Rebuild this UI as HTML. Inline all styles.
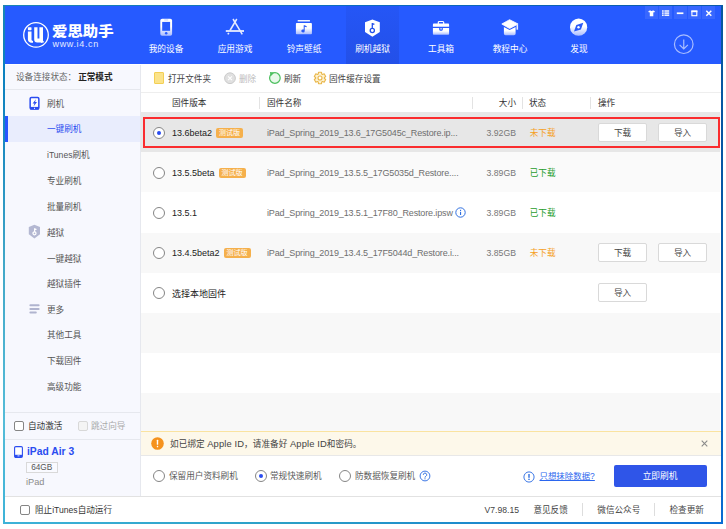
<!DOCTYPE html>
<html lang="zh-CN">
<head>
<meta charset="utf-8">
<title>爱思助手</title>
<style>
*{box-sizing:border-box;margin:0;padding:0}
html,body{width:726px;height:529px;overflow:hidden;background:#fff}
body{position:relative;font-family:"Liberation Sans","Noto Sans CJK SC",sans-serif;font-size:8.600px;color:#333;-webkit-font-smoothing:antialiased}
.abs,.t{position:absolute}
.t{white-space:nowrap;line-height:12px;height:12px}
#frame{position:absolute;left:3px;top:5px;width:720px;height:519px;
 background:linear-gradient(180deg,#1a88b4 0%,#0a80c0 12%,#1888c0 25%,#42a8c8 50%,#55bcd8 80%,#3db3d8 100%)}
#frameR{position:absolute;left:721px;top:5px;width:2px;height:519px;background:linear-gradient(180deg,#06589f 0%,#0557a8 50%,#0a6cd2 100%)}
#frameB{position:absolute;left:3px;top:522px;width:720px;height:2px;background:linear-gradient(90deg,#3db3d8 0%,#2a9fc6 40%,#0a6ed6 100%)}
#frameT{position:absolute;left:3px;top:5px;width:720px;height:1px;background:linear-gradient(90deg,#1a86b4 0%,#0a6cc0 50%,#0a5aa8 100%)}
#win{position:absolute;left:5px;top:6px;width:716px;height:516px;background:#fff;overflow:hidden}
/* everything inside #win uses page coords via offset wrapper */
#pg{position:absolute;left:-5px;top:-6px;width:726px;height:529px}
#hdr{position:absolute;left:5px;top:6px;width:716px;height:58px;background:#265aff}
#tabact{position:absolute;left:346px;top:6px;width:53px;height:58px;background:linear-gradient(180deg,#2556f6,#2350e8)}
.nav{position:absolute;top:43px;width:60px;text-align:center;color:#fff;font-size:8.700px;line-height:12px;white-space:nowrap}
#side{position:absolute;left:5px;top:65px;width:135px;height:431px;background:#f7f8fe}
.hl{position:absolute;height:1px;background:#e6e8ee}
.vl{position:absolute;width:1px;background:#e6e8ee}
.si{position:absolute;left:47px;font-size:8.600px;line-height:12px;color:#555;white-space:nowrap}
.sg{position:absolute;left:47px;font-size:8.600px;line-height:12px;color:#555;white-space:nowrap}
.row{position:absolute;left:141px;width:579px;height:40px}
.radio{position:absolute;width:12px;height:12px;border:1px solid #858585;border-radius:50%;background:#fff}
.radio.on::after{content:"";position:absolute;left:3px;top:3px;width:4px;height:4px;border-radius:50%;background:#2a4cf0}
.ver{position:absolute;left:172px;font-size:9px;line-height:12px;color:#222;white-space:nowrap}
.tag{display:inline-block;background:#f5b04c;color:#fff;font-size:7px;line-height:9.500px;height:9.500px;padding:0 3px;border-radius:2px;vertical-align:1px;margin-left:4px}
.fn{position:absolute;left:267px;font-size:9px;line-height:12px;color:#6e6e6e;white-space:nowrap;letter-spacing:-.14px}
.sz{position:absolute;left:470px;width:46px;text-align:right;font-size:8.700px;line-height:12px;color:#777}
.st{position:absolute;left:529.700px;font-size:8.600px;line-height:12px;white-space:nowrap}
.btn{position:absolute;width:49px;height:19px;border:1px solid #d9d9d9;background:#fff;font-size:8.600px;line-height:18px;text-align:center;color:#444;border-radius:2px}
.cb{position:absolute;width:10px;height:10px;border:1px solid #858585;border-radius:2px;background:#fff}
</style>
</head>
<body>
<div id="frame"></div><div id="frameR"></div><div id="frameB"></div><div id="frameT"></div>
<div id="win"><div id="pg">

<!-- header -->
<div id="hdr"></div>
<div id="tabact"></div>

<!-- logo -->
<svg class="abs" style="left:22px;top:21px" width="28" height="28" viewBox="0 0 28 28">
 <circle cx="14" cy="13.900" r="12.300" fill="none" stroke="#fff" stroke-width="1.300"/>
 <rect x="5.900" y="6.200" width="3.600" height="3" rx=".6" fill="#fff"/>
 <path d="M5.900 10.400h3.600v8.200c0 .9.500 1.400 1.500 1.500v1.700c-3.300 0-5.100-1.100-5.100-3.400z" fill="#fff"/>
 <path d="M12.200 6.200h3.300v11.200h1.900v-11.200h3.600v13.600c.5.300.9.800 1 1.400l-2.600.8c-.2-.3-.5-.5-.9-.5h-3.300c-2 0-3-1-3-3z" fill="#fff"/>
</svg>
<div class="t" style="left:52px;top:22.500px;font-size:13.500px;line-height:17px;height:17px;color:#fff;font-weight:900;transform-origin:0 50%;transform:scaleX(1.140)">爱思助手</div>
<div class="t" style="left:52.500px;top:39px;font-size:9px;line-height:11px;height:11px;color:#e4eaff;letter-spacing:.65px">www.i4.cn</div>

<!-- nav icons -->
<svg class="abs" style="left:160px;top:18px" width="13" height="19" viewBox="0 0 13 19">
 <defs><linearGradient id="gw" x1="0" y1="0" x2="0" y2="1"><stop offset="0" stop-color="#fff"/><stop offset=".45" stop-color="#fff"/><stop offset="1" stop-color="#a9bbff"/></linearGradient></defs>
 <rect x="0.300" y="0.800" width="11.800" height="17" rx="1.800" fill="url(#gw)"/>
 <rect x="2.200" y="3.900" width="7.900" height="8.900" fill="#265aff"/>
 <circle cx="6.200" cy="15.300" r="1.250" fill="#265aff"/>
 <rect x="4.200" y="1.500" width="4" height=".9" fill="#b9c8ff"/>
</svg>
<svg class="abs" style="left:225px;top:18px" width="20" height="18" viewBox="0 0 20 18">
 <g stroke="#e6ebff" stroke-width="1.500" stroke-linecap="butt" fill="none">
  <path d="M11.800 1L5 12.500"/><path d="M8 1L17.300 16.300"/><path d="M.8 13H19" stroke-width="1.800"/><path d="M3.800 14.800L2.900 16.400" stroke-width="1.600"/>
 </g>
</svg>
<svg class="abs" style="left:295px;top:19px" width="18" height="17" viewBox="0 0 18 17">
 <rect x="2.600" y="1" width="12.400" height="1.500" rx=".5" fill="#eef2ff"/>
 <rect x="0.900" y="4.100" width="16" height="11.100" rx=".8" fill="url(#gw)"/>
 <path d="M8.700 6.300h1l2 .9v1.100l-2-.6v4.200a1.700 1.500 0 1 1-1-1.300z" fill="#2a58f5"/>
</svg>
<svg class="abs" style="left:364px;top:19px" width="17" height="18" viewBox="0 0 17 18">
 <path d="M8.400.4L15.800 3.300v9.800L8.400 17.700 1 13.100V3.300z" fill="#fff"/>
 <circle cx="8.300" cy="11.500" r="2.100" fill="none" stroke="#2350ea" stroke-width="1.300"/>
 <path d="M8.300 9.400V4M8.300 4.600l2.100.7" fill="none" stroke="#2350ea" stroke-width="1.300"/>
</svg>
<svg class="abs" style="left:432px;top:19px" width="18" height="17" viewBox="0 0 18 17">
 <path d="M6.300 5V3.400c0-.6.400-.9.900-.9h3.600c.5 0 .9.300.9.900V5" fill="none" stroke="#fff" stroke-width="1.200"/>
 <path d="M2 4.600h14c.7 0 1.100.4 1.100 1.100v2H.9v-2c0-.7.400-1.100 1.100-1.100z" fill="#fff"/>
 <path d="M.9 9h6.300v1.200c0 1 .7 1.600 1.800 1.600s1.800-.6 1.800-1.600V9h6.300v5.700c0 .7-.4 1.100-1.100 1.100H2c-.7 0-1.100-.4-1.100-1.100z" fill="url(#gw)"/>
 <rect x="8.300" y="9" width="1.500" height="1.400" rx=".5" fill="#e4eaff"/>
</svg>
<svg class="abs" style="left:500px;top:19px" width="20" height="17" viewBox="0 0 20 17">
 <path d="M9.600.7L18.100 5 9.600 9.500 1.800 5z" fill="#fff" stroke="#fff" stroke-width=".8" stroke-linejoin="round"/>
 <path d="M3.900 8l5.700 3.100L15.600 8v6.600c0 1-.7 1.700-1.700 1.700H5.600c-1 0-1.700-.7-1.700-1.700z" fill="url(#gw)"/>
 <rect x="16.500" y="5.500" width="1.600" height="5.200" fill="#e8edff"/>
</svg>
<svg class="abs" style="left:569px;top:18px" width="19" height="19" viewBox="0 0 19 19">
 <circle cx="9.600" cy="9.200" r="8.600" fill="url(#gw)"/>
 <path d="M14.300 4.800L11.900 11.400 5 13.500 7.300 6.900z" fill="#2a5af8"/>
 <circle cx="9.500" cy="9.200" r="1.200" fill="#fff"/>
</svg>

<div class="nav" style="left:136px">我的设备</div>
<div class="nav" style="left:205px">应用游戏</div>
<div class="nav" style="left:274px">铃声壁纸</div>
<div class="nav" style="left:342.500px">刷机越狱</div>
<div class="nav" style="left:411px">工具箱</div>
<div class="nav" style="left:480px">教程中心</div>
<div class="nav" style="left:549px">发现</div>

<!-- window controls -->
<div class="abs" style="left:645px;top:6px;width:13px;height:13px;background:#3867ff"></div>
<div class="abs" style="left:659.300px;top:6px;width:13px;height:13px;background:#3867ff"></div>
<div class="abs" style="left:673.600px;top:6px;width:13px;height:13px;background:#3867ff"></div>
<div class="abs" style="left:688px;top:6px;width:13px;height:13px;background:#3867ff"></div>
<div class="abs" style="left:702.200px;top:6px;width:13px;height:13px;background:#3867ff"></div>
<svg class="abs" style="left:645px;top:6px" width="72" height="13" viewBox="0 0 72 13">
 <path d="M3.300 5.200l1.500-.8h.8c.2.500.6.700 1 .700s.8-.2 1-.7h.8l1.500.8-.7 1.400-.9-.3v3.900H4.800V6.300l-.9.300z" fill="#fff"/>
 <g fill="#fff"><rect x="17" y="4.300" width="1.700" height="1.400"/><rect x="19.400" y="4.300" width="4.800" height="1.400"/><rect x="17" y="6.400" width="1.700" height="1.400"/><rect x="19.400" y="6.400" width="4.800" height="1.400"/><rect x="17" y="8.500" width="1.700" height="1.400"/><rect x="19.400" y="8.500" width="4.800" height="1.400"/></g>
 <rect x="31.800" y="6.400" width="6.600" height="1.700" fill="#fff"/>
 <rect x="46.900" y="5.300" width="4.900" height="4.400" fill="none" stroke="#fff" stroke-width="1.100"/><rect x="46.300" y="4.400" width="6.100" height="1.800" fill="#fff"/>
 <path d="M61.300 4.800l5 5M66.300 4.800l-5 5" stroke="#fff" stroke-width="1.500" fill="none"/>
</svg>
<!-- download circle -->
<svg class="abs" style="left:672px;top:32px" width="24" height="24" viewBox="0 0 24 24">
 <circle cx="11.750" cy="12.200" r="9.300" fill="none" stroke="#a9bdff" stroke-width="1.200"/>
 <path d="M11.750 7.600v9M7.600 12.900l4.150 4 4.150-4" fill="none" stroke="#a9bdff" stroke-width="1.200"/>
</svg>

<!-- sidebar -->
<div id="side"></div>
<div class="vl" style="left:140px;top:65px;height:431px"></div>
<div class="hl" style="left:5px;top:89px;width:135px"></div>
<div class="t" style="left:16px;top:71px;color:#666">设备连接状态：<b style="color:#222;margin-left:2px">正常模式</b></div>

<svg class="abs" style="left:29px;top:96px" width="12" height="15" viewBox="0 0 12 15">
 <rect x="1.150" y="1.450" width="8.700" height="11.500" rx="1.300" fill="#fff" stroke="#2a4cf0" stroke-width="1.500"/>
 <rect x="1" y="10.900" width="9" height="2.600" fill="#2a4cf0"/><rect x="5" y="11.800" width="1" height="1" fill="#fff"/>
 <path d="M6.900 3.200L3.600 7.500h1.900L4.500 10.400l3.500-4.300H6.100z" fill="#2a4cf0"/>
</svg>
<div class="sg" style="top:97.500px">刷机</div>
<div class="abs" style="left:5px;top:116px;width:135px;height:26px;background:#e9edfd"></div>
<div class="abs" style="left:5px;top:116px;width:3px;height:26px;background:#2856ff"></div>
<div class="si" style="top:123px;color:#2a4cf0">一键刷机</div>
<div class="si" style="top:149px">iTunes刷机</div>
<div class="si" style="top:175px">专业刷机</div>
<div class="si" style="top:201px">批量刷机</div>
<svg class="abs" style="left:28px;top:224px" width="13" height="15" viewBox="0 0 13 15">
 <path d="M6.400.8L12 2.900v7.300L6.400 14.500.8 10.200V2.900z" fill="#b4b8d2"/>
 <circle cx="6.500" cy="9.300" r="1.500" fill="none" stroke="#fff" stroke-width="1.300"/><path d="M6.600 8V4.200M6.600 4.800l1.900.7" fill="none" stroke="#fff" stroke-width="1.200"/>
</svg>
<div class="sg" style="top:226.500px">越狱</div>
<div class="si" style="top:252.500px">一键越狱</div>
<div class="si" style="top:278px">越狱插件</div>
<svg class="abs" style="left:29px;top:304px" width="12" height="10" viewBox="0 0 12 10">
 <rect x=".4" y=".2" width="10.200" height="2" rx="1" fill="#b0b4cf"/><rect x=".4" y="3.900" width="10.200" height="2" rx="1" fill="#b0b4cf"/><rect x=".4" y="7.500" width="7.400" height="2" rx="1" fill="#b0b4cf"/>
</svg>
<div class="sg" style="top:303.500px">更多</div>
<div class="si" style="top:329px">其他工具</div>
<div class="si" style="top:355px">下载固件</div>
<div class="si" style="top:381px">高级功能</div>

<div class="hl" style="left:5px;top:412px;width:135px"></div>
<div class="cb" style="left:14px;top:421px"></div>
<div class="t" style="left:28px;top:420px;color:#333">自动激活</div>
<div class="cb" style="left:77.500px;top:421px;border-color:#d8d8d8;background:#f4f4f4"></div>
<div class="t" style="left:91px;top:420px;color:#aaa">跳过向导</div>
<div class="hl" style="left:5px;top:439px;width:135px"></div>

<svg class="abs" style="left:14px;top:446px" width="9" height="12" viewBox="0 0 9 12">
 <rect x="0.600" y="0.600" width="7.800" height="10.800" rx="1.200" fill="#fff" stroke="#2a4cf0" stroke-width="1.100"/><rect x="1" y="8.800" width="7" height="2.200" fill="#2a4cf0"/><rect x="3.500" y="9.500" width="2" height=".8" fill="#fff"/>
</svg>
<div class="t" style="left:27px;top:445px;font-size:10.300px;line-height:14px;height:14px;font-weight:700;color:#2a4cf0">iPad Air 3</div>
<div class="abs" style="left:26px;top:462px;width:31.500px;height:11px;border:1px solid #d9d9d9;background:#f9faff;font-size:8.300px;line-height:9px;text-align:center;color:#555">64GB</div>
<div class="t" style="left:26px;top:476px;font-size:9.200px;color:#8a8a8a">iPad</div>

<!-- toolbar -->
<div class="abs" style="left:154px;top:72px;width:9.500px;height:12px;background:#fbe38a;border:1px solid #f3cf55;border-radius:1px"></div>
<div class="t" style="left:168px;top:72.600px;color:#444">打开文件夹</div>
<svg class="abs" style="left:224px;top:72px" width="12" height="12" viewBox="0 0 12 12"><circle cx="6" cy="6.200" r="5.400" fill="#e0e0e0" stroke="#c6c6c6" stroke-width=".9"/><path d="M4.100 4.300l3.800 3.800M7.900 4.300L4.100 8.100" stroke="#fff" stroke-width="1.100"/></svg>
<div class="t" style="left:239px;top:72.600px;color:#bbb">删除</div>
<svg class="abs" style="left:268px;top:71px" width="14" height="14" viewBox="0 0 14 14"><circle cx="6.900" cy="7" r="5.300" fill="#e9f9eb" stroke="#4cbf5e" stroke-width="1.200"/><path d="M1.900 1l4.500.6-3.700 3.600z" fill="#4cbf5e"/></svg>
<div class="t" style="left:284px;top:72.600px;color:#444">刷新</div>
<svg class="abs" style="left:313px;top:71px" width="14" height="14" viewBox="0 0 14 14"><path d="M5.29 2.95 L5.48 1.30 L8.52 1.30 L8.71 2.95 L9.65 3.49 L11.18 2.84 L12.70 5.46 L11.37 6.46 L11.37 7.54 L12.70 8.54 L11.18 11.16 L9.65 10.51 L8.71 11.05 L8.52 12.70 L5.48 12.70 L5.29 11.05 L4.35 10.51 L2.82 11.16 L1.30 8.54 L2.63 7.54 L2.63 6.46 L1.30 5.46 L2.82 2.84 L4.35 3.49z" fill="#fdf2d2" stroke="#e9b649" stroke-width="1.100" stroke-linejoin="round"/><circle cx="7" cy="7" r="2" fill="#fff" stroke="#e9b649" stroke-width="1.100"/></svg>
<div class="t" style="left:329px;top:72.600px;color:#444">固件缓存设置</div>
<div class="hl" style="left:141px;top:92px;width:580px;background:#eee"></div>

<!-- table header -->
<div class="t" style="left:172px;top:97px;color:#333">固件版本</div>
<div class="vl" style="left:259px;top:97px;height:12px;background:#e3e3e3"></div>
<div class="t" style="left:267px;top:97px;color:#333">固件名称</div>
<div class="vl" style="left:472px;top:97px;height:12px;background:#e3e3e3"></div>
<div class="t" style="left:470px;top:97px;width:46px;text-align:right;color:#333">大小</div>
<div class="vl" style="left:522px;top:97px;height:12px;background:#e3e3e3"></div>
<div class="t" style="left:529px;top:97px;color:#333">状态</div>
<div class="vl" style="left:590px;top:97px;height:12px;background:#e3e3e3"></div>
<div class="t" style="left:598px;top:97px;color:#333">操作</div>

<!-- rows -->
<div class="row" style="top:112px;background:#e7e7e7"></div>
<div class="row" style="top:152px;background:#fafafa"></div>
<div class="row" style="top:192px;background:#fff;height:41px"></div>
<div class="row" style="top:233px;background:#f8f8f8"></div>
<div class="row" style="top:273px;background:#fff"></div>
<div class="row" style="top:313px;background:#f8f8f8"></div>
<div class="row" style="top:353px;background:#fff"></div>
<div class="row" style="top:393px;background:#f8f8f8;height:38px"></div>
<div class="abs" style="left:143px;top:117px;width:577px;height:31px;border:2px solid #fa2c2e"></div>

<div class="radio on" style="left:152.500px;top:126.500px"></div>
<div class="ver" style="top:127px">13.6beta2<span class="tag">测试版</span></div>
<div class="fn" style="top:127px">iPad_Spring_2019_13.6_17G5045c_Restore.ip...</div>
<div class="sz" style="top:127px">3.92GB</div>
<div class="st" style="top:127px;color:#f5a01e">未下载</div>
<div class="btn" style="left:598px;top:123px">下载</div>
<div class="btn" style="left:658px;top:123px">导入</div>

<div class="radio" style="left:152.500px;top:166.500px"></div>
<div class="ver" style="top:167px">13.5.5beta<span class="tag">测试版</span></div>
<div class="fn" style="top:167px">iPad_Spring_2019_13.5.5_17G5035d_Restore....</div>
<div class="sz" style="top:167px">3.89GB</div>
<div class="st" style="top:167px;color:#1f9d2c">已下载</div>

<div class="radio" style="left:152.500px;top:206.500px"></div>
<div class="ver" style="top:207px">13.5.1</div>
<div class="fn" style="top:207px">iPad_Spring_2019_13.5.1_17F80_Restore.ipsw</div>
<svg class="abs" style="left:454.600px;top:207.300px" width="11" height="11" viewBox="0 0 11 11"><circle cx="5.500" cy="5.500" r="4.700" fill="#fff" stroke="#2f6fe0" stroke-width="1"/><rect x="5" y="4.800" width="1.100" height="3.200" fill="#2f6fe0"/><rect x="5" y="2.800" width="1.100" height="1.200" fill="#2f6fe0"/></svg>
<div class="sz" style="top:207px">3.89GB</div>
<div class="st" style="top:207px;color:#1f9d2c">已下载</div>

<div class="radio" style="left:152.500px;top:246.500px"></div>
<div class="ver" style="top:247px">13.4.5beta2<span class="tag">测试版</span></div>
<div class="fn" style="top:247px">iPad_Spring_2019_13.4.5_17F5044d_Restore.i...</div>
<div class="sz" style="top:247px">3.85GB</div>
<div class="st" style="top:247px;color:#f5a01e">未下载</div>
<div class="btn" style="left:598px;top:243px">下载</div>
<div class="btn" style="left:658px;top:243px">导入</div>

<div class="radio" style="left:152.500px;top:286.500px"></div>
<div class="ver" style="top:288px">选择本地固件</div>
<div class="btn" style="left:598px;top:283px">导入</div>

<!-- info bar -->
<div class="abs" style="left:141px;top:431px;width:580px;height:25px;background:#fdf8ea;border-top:1px solid #fae3a0;border-bottom:1px solid #e8e8e8"></div>
<svg class="abs" style="left:151px;top:437px" width="13" height="13" viewBox="0 0 13 13"><circle cx="6.500" cy="6.500" r="6.300" fill="#f5921e"/><rect x="5.800" y="2.800" width="1.400" height="5" rx=".5" fill="#fff"/><rect x="5.800" y="8.800" width="1.400" height="1.500" rx=".5" fill="#fff"/></svg>
<div class="t" style="left:170px;top:438px;color:#444;letter-spacing:.1px">如已绑定 <span style="font-size:9.400px">Apple ID</span>，请准备好 <span style="font-size:9.400px">Apple ID</span>和密码。</div>
<svg class="abs" style="left:701px;top:440px" width="7" height="7" viewBox="0 0 7 7"><path d="M.7.700l5.600 5.600M6.300.700L.7 6.300" stroke="#8a8a8a" stroke-width="1.100"/></svg>

<!-- options -->
<div class="radio" style="left:152.500px;top:470px"></div>
<div class="t" style="left:169px;top:470px;color:#5a5a5a">保留用户资料刷机</div>
<div class="radio on" style="left:254.500px;top:470px"></div>
<div class="t" style="left:270px;top:470px;color:#5a5a5a">常规快速刷机</div>
<div class="radio" style="left:339px;top:470px"></div>
<div class="t" style="left:355px;top:470px;color:#5a5a5a">防数据恢复刷机</div>
<svg class="abs" style="left:419px;top:470px" width="12" height="12" viewBox="0 0 12 12"><circle cx="6" cy="6" r="4.900" fill="#fff" stroke="#3d78e6" stroke-width="1"/><path d="M4.300 4.800a1.700 1.700 0 1 1 2.500 1.500c-.6.300-.8.600-.8 1.300" fill="none" stroke="#2f6fe0" stroke-width="1"/><rect x="5.500" y="8.300" width="1" height="1" fill="#2f6fe0"/></svg>

<svg class="abs" style="left:522.700px;top:470.700px" width="12" height="12" viewBox="0 0 12 12"><circle cx="6" cy="6" r="5.100" fill="#fff" stroke="#3d78e6" stroke-width="1"/><rect x="5.300" y="3" width="1.400" height="3.800" fill="#2f6fe0"/><rect x="5.300" y="7.700" width="1.400" height="1.300" fill="#2f6fe0"/></svg>
<div class="t" style="left:539.500px;top:470px;color:#2b66ee;text-decoration:underline;text-decoration-thickness:.8px;font-size:8.450px">只想抹除数据?</div>
<div class="abs" style="left:613.500px;top:465px;width:93px;height:22px;background:#2f55e8;border-radius:2px;color:#fff;font-size:8.700px;line-height:22px;text-align:center">立即刷机</div>

<!-- bottom bar -->
<div class="hl" style="left:5px;top:496px;width:716px;background:#e2e2e2"></div>
<div class="cb" style="left:20px;top:504.500px"></div>
<div class="t" style="left:35px;top:504px;color:#333">阻止iTunes自动运行</div>
<div class="t" style="left:471.800px;width:60px;text-align:center;top:504px;color:#444">V7.98.15</div>
<div class="t" style="left:520.600px;width:60px;text-align:center;top:504px;color:#444">意见反馈</div>
<div class="vl" style="left:582px;top:503px;height:13px;background:#ddd"></div>
<div class="t" style="left:588.800px;width:60px;text-align:center;top:504px;color:#444">微信公众号</div>
<div class="vl" style="left:654px;top:503px;height:13px;background:#ddd"></div>
<div class="t" style="left:656.700px;width:60px;text-align:center;top:504px;color:#444">检查更新</div>

</div></div>
</body>
</html>
